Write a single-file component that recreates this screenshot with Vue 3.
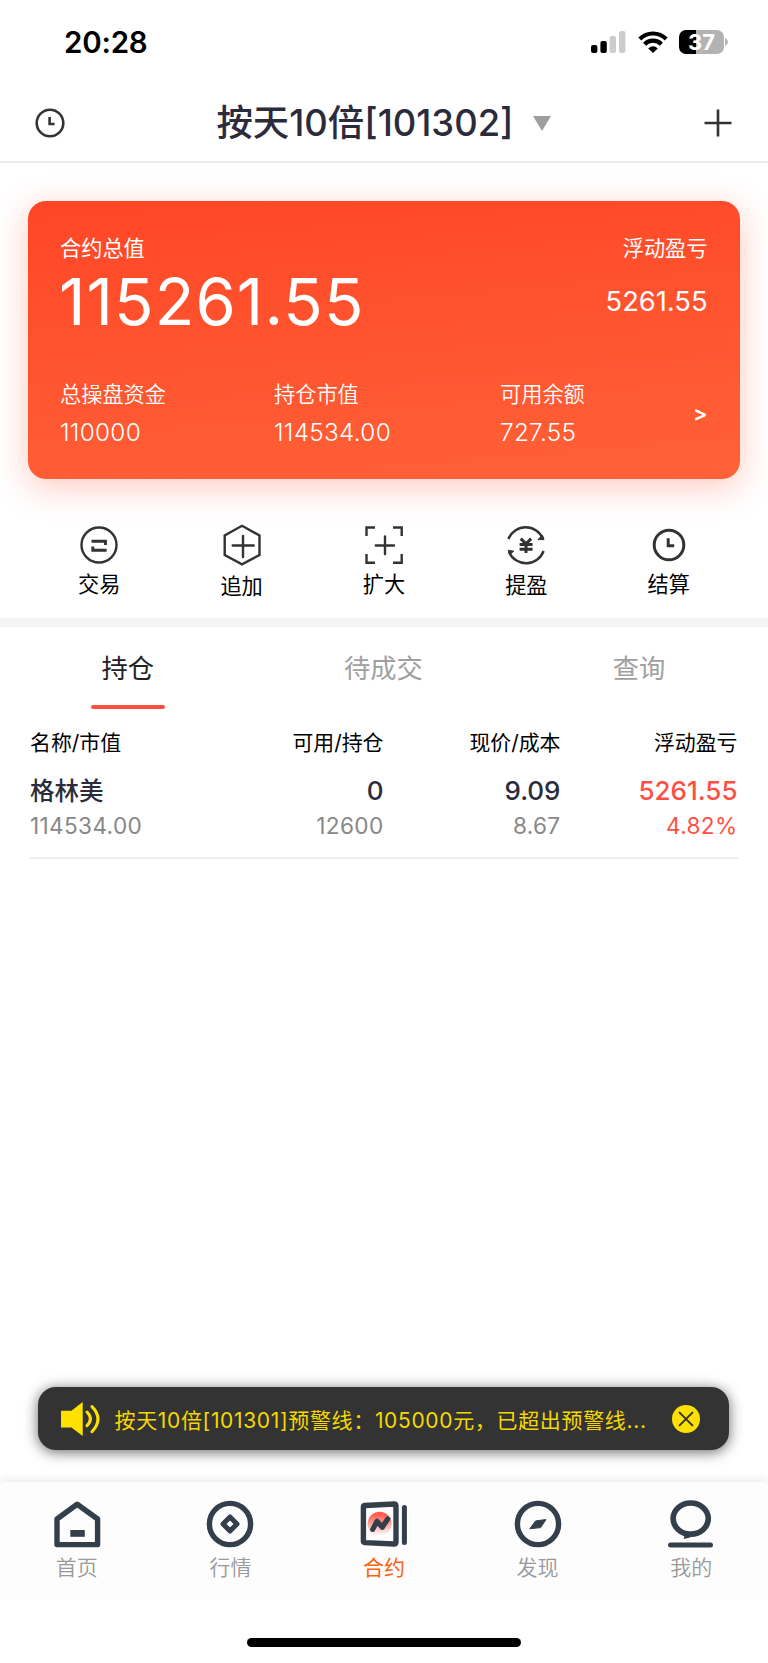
<script setup>
import { ref } from 'vue';

const account = ref({
    name: '按天10倍[101302]',
    total: '115261.55',
    profit: '5261.55',
});

const funds = [
    { label: '总操盘资金', value: '110000' },
    { label: '持仓市值', value: '114534.00' },
    { label: '可用余额', value: '727.55' },
];

const actions = [
    { key: 'trade', label: '交易' },
    { key: 'append', label: '追加' },
    { key: 'expand', label: '扩大' },
    { key: 'withdraw', label: '提盈' },
    { key: 'settle', label: '结算' },
];

const tabs = ['持仓', '待成交', '查询'];
const activeTab = ref('持仓');

const columns = ['名称/市值', '可用/持仓', '现价/成本', '浮动盈亏'];
const positions = [
    {
        name: '格林美',
        value: '114534.00',
        usable: '0',
        amount: '12600',
        price: '9.09',
        cost: '8.67',
        profit: '5261.55',
        rate: '4.82%',
    },
];

const showNotice = ref(true);
const notice = '按天10倍[101301]预警线：105000元，已超出预警线...';

const navs = [
    { key: 'home', label: '首页' },
    { key: 'market', label: '行情' },
    { key: 'contract', label: '合约' },
    { key: 'discover', label: '发现' },
    { key: 'mine', label: '我的' },
];
const activeNav = ref('contract');
</script>

<template>
    <div class="page">
        <div class="status-bar">
            <span class="time">20:28</span>
            <div class="status-icons">
                <svg class="signal" width="35" height="22" viewBox="0 0 35 22">
                    <rect x="0" y="14" width="6.4" height="8" rx="2" />
                    <rect x="9.4" y="10" width="6.4" height="12" rx="2" />
                    <rect x="18.6" y="5" width="6.4" height="17" rx="2" fill="#ccc" />
                    <rect x="28" y="0" width="6.4" height="22" rx="2" fill="#ccc" />
                </svg>
                <svg class="wifi" width="30" height="22" viewBox="0 0 30 22">
                    <g fill="none" stroke="#000" stroke-width="4.2">
                        <path d="M1.8 8A18.6 18.6 0 0 1 28.2 8" />
                        <path d="M6.6 13.2A11.8 11.8 0 0 1 23.4 13.2" />
                    </g>
                    <path d="M10.2 17.4Q15 13.3 19.8 17.4L15 22Z" />
                </svg>
                <div class="battery">
                    <span>37</span>
                </div>
                <svg class="battery-cap" width="3" height="8" viewBox="0 0 3 8">
                    <path d="M0 0Q3 1.4 3 4T0 8Z" fill="#b3b3b3" />
                </svg>
            </div>
        </div>

        <header class="header">
            <svg class="icon-clock" width="30" height="30" viewBox="0 0 30 30">
                <circle cx="15" cy="15" r="13.3" />
                <path d="M14.6 9v7h5" />
            </svg>
            <div class="title">
                <span>{{ account.name }}</span>
                <i class="caret"></i>
            </div>
            <svg class="icon-plus" width="28" height="28" viewBox="0 0 28 28">
                <path d="M14 .5v27M.5 14h27" />
            </svg>
        </header>

        <section class="card">
            <div class="card-labels">
                <span>合约总值</span>
                <span>浮动盈亏</span>
            </div>
            <div class="card-main">
                <span class="total">{{ account.total }}</span>
                <span class="profit">{{ account.profit }}</span>
            </div>
            <div class="card-funds">
                <div v-for="item in funds" :key="item.label" class="fund">
                    <p class="fund-label">{{ item.label }}</p>
                    <p class="fund-value">{{ item.value }}</p>
                </div>
                <span class="more">&gt;</span>
            </div>
        </section>

        <nav class="actions">
            <a v-for="item in actions" :key="item.key" :class="['action', item.key]">
                <svg v-if="item.key === 'trade'" width="38" height="38" viewBox="0 0 38 38">
                    <circle cx="19" cy="19" r="17.5" />
                    <path d="M11.5 15.3h14v3.6M26.6 24.3H12.8v-3.8" stroke-width="2.9" />
                </svg>
                <svg v-else-if="item.key === 'append'" width="38" height="42" viewBox="0 0 38 42">
                    <path d="M19 1.8L36.5 11.5V31L19 40.3L1.7 31V11.5Z" />
                    <path d="M9.7 21.5h21M20 12v21" stroke-linecap="round" />
                </svg>
                <svg v-else-if="item.key === 'expand'" width="38" height="38" viewBox="0 0 38 38">
                    <path d="M1.5 10V1.5H10M28 1.5h8.7V10M36.7 28v8.7H28M10 36.7H1.5V28" />
                    <path d="M10.8 19.5H29M20 10.5v17.5" stroke-linecap="round" />
                </svg>
                <svg v-else-if="item.key === 'withdraw'" width="38" height="40" viewBox="0 0 38 40">
                    <path d="M1.4 14A18.6 18.6 0 0 1 36 14M36.6 26A18.6 18.6 0 0 1 2 27" />
                    <path d="M31 14.6h6L35.4 10ZM1.2 25.2L6.8 26.2 2.8 29.4Z" stroke-width="1" fill="#333" />
                    <path d="M13.7 13.6l5.3 5.2 5.1-5.2M12.6 19.6h13M12.6 24.3h13M19 18.8V28" stroke-width="3" />
                </svg>
                <svg v-else width="34" height="34" viewBox="0 0 34 34">
                    <circle cx="17" cy="17" r="14.8" stroke-width="3" />
                    <path d="M16.2 10.2v7.6h6" stroke-width="3" />
                </svg>
                <span>{{ item.label }}</span>
            </a>
        </nav>

        <div class="tabs">
            <div
                v-for="tab in tabs"
                :key="tab"
                :class="['tab', { active: tab === activeTab }]"
                @click="activeTab = tab"
            >
                {{ tab }}
            </div>
        </div>

        <div class="table">
            <div class="row table-head">
                <span v-for="col in columns" :key="col">{{ col }}</span>
            </div>
            <div v-for="p in positions" :key="p.name" class="position">
                <div class="row primary">
                    <span class="name">{{ p.name }}</span>
                    <span>{{ p.usable }}</span>
                    <span>{{ p.price }}</span>
                    <span class="up">{{ p.profit }}</span>
                </div>
                <div class="row secondary">
                    <span>{{ p.value }}</span>
                    <span>{{ p.amount }}</span>
                    <span>{{ p.cost }}</span>
                    <span class="up">{{ p.rate }}</span>
                </div>
            </div>
        </div>

        <div v-if="showNotice" class="notice">
            <svg class="speaker" width="42" height="36" viewBox="0 0 42 36">
                <path d="M1 9.7h10.4L22.7 1v34L11.4 26.5H1Z" fill="#ffe100" stroke="none" />
                <path d="M27 11q6.8 6.8 0 13.6M32 5.6q12 12.4 0 25" />
            </svg>
            <span class="notice-text">{{ notice }}</span>
            <svg class="close" width="28" height="28" viewBox="0 0 28 28" @click="showNotice = false">
                <circle cx="14" cy="14" r="14" fill="#ffe100" stroke="none" />
                <path d="M7.6 7.6l12.8 12.8M20.4 7.6L7.6 20.4" />
            </svg>
        </div>

        <footer class="tabbar">
            <a
                v-for="item in navs"
                :key="item.key"
                :class="['nav', { active: item.key === activeNav }]"
                @click="activeNav = item.key"
            >
                <svg v-if="item.key === 'home'" width="48" height="48" viewBox="0 0 48 48">
                    <path d="M24.2 4.2L44.6 19V44.6H4V19Z" />
                    <path d="M17.3 33.4h14.5" stroke-width="6.8" />
                </svg>
                <svg v-else-if="item.key === 'market'" width="48" height="48" viewBox="0 0 48 48">
                    <circle cx="24" cy="24" r="20.6" />
                    <path d="M24 17l7 7-7 7-7-7Z" stroke-width="5" />
                </svg>
                <svg v-else-if="item.key === 'contract'" width="48" height="48" viewBox="0 0 48 48">
                    <defs>
                        <linearGradient id="sun" x1="0" y1="0" x2="0" y2="1">
                            <stop offset="0.1" stop-color="#ff5b4e" />
                            <stop offset="1" stop-color="#ff5b4e" stop-opacity="0" />
                        </linearGradient>
                    </defs>
                    <path d="M5 5.5L34 4Q36 4 36 6V42Q36 44 34 44L5 42.6Q3.4 42.4 3.4 41V7Q3.4 5.6 5 5.5Z" />
                    <circle cx="19.6" cy="23.8" r="12" fill="url(#sun)" stroke="none" />
                    <path d="M12.7 29.4L17 21.2 22.3 27.2 27.7 19" stroke-width="5.2" stroke-linecap="round" />
                    <path d="M44.4 7.6V42.5" stroke-width="5" stroke-linecap="round" />
                </svg>
                <svg v-else-if="item.key === 'discover'" width="48" height="48" viewBox="0 0 48 48">
                    <circle cx="24" cy="24" r="20.6" />
                    <path d="M15.8 28.8L21.6 20.9 32 19.6 26.6 27.6Z" fill="#333f4a" stroke-width="1" />
                </svg>
                <svg v-else width="48" height="48" viewBox="0 0 48 48">
                    <ellipse cx="23.7" cy="18.6" rx="17.6" ry="15.6" stroke-width="5.6" />
                    <path d="M15.5 33L17.5 35.6 16.6 39Q28 37.4 36 29.6Z" fill="#333f4a" stroke="none" />
                    <path d="M3.5 45H43.5" stroke-width="5" stroke-linecap="round" />
                </svg>
                <span>{{ item.label }}</span>
            </a>
        </footer>
        <div class="home-indicator"></div>
    </div>
</template>

<style>
body {
    background: #fff;
}
</style>

<style scoped>
.page {
    display: flex;
    flex-direction: column;
    width: 768px;
    height: 1663px;
    overflow: hidden;
    background: #fff;
    color: #000;
    font-family: Inter, "Noto Sans CJK SC", sans-serif;
    font-size: 21.2px;
}

svg {
    display: block;
    flex-shrink: 0;
}

p {
    margin: 0;
}

.status-bar {
    display: flex;
    align-items: center;
    justify-content: space-between;
    height: 84px;
    padding: 0 40px 0 64px;
}

.time {
    font-size: 29.5px;
    font-weight: 600;
    letter-spacing: -0.2px;
}

.status-icons {
    display: flex;
    align-items: center;
}

.wifi {
    margin: 0 11px 0 12px;
}

.battery {
    width: 45px;
    height: 24px;
    border-radius: 7px;
    background: linear-gradient(90deg, #000 38%, #b3b3b3 38%);
    color: #fff;
    font-size: 22px;
    font-weight: 700;
    line-height: 24px;
    text-align: center;
}

.battery-cap {
    margin-left: 1px;
}

.header {
    display: flex;
    align-items: center;
    justify-content: space-between;
    box-sizing: border-box;
    height: 79px;
    padding: 1px 36px 0 35px;
    border-bottom: 2px solid #ececec;
}

.icon-clock,
.icon-plus {
    fill: none;
    stroke: #333;
    stroke-width: 2.6;
}

.title {
    display: flex;
    align-items: center;
    gap: 19px;
    margin-left: -2px;
    color: #2b2b3b;
    font-size: 36.4px;
    font-weight: 500;
    line-height: 50px;
}

.caret {
    border: 9.5px solid transparent;
    border-top: 15px solid #9e9e9e;
    border-bottom: 0;
}

.card {
    box-sizing: border-box;
    height: 278px;
    margin: 37.5px 28px 0;
    padding: 31px 32.5px 0 32px;
    border-radius: 18px;
    background: linear-gradient(175deg, #ff4626, #ff6238);
    box-shadow: 0 8px 34px rgba(255, 72, 38, 0.3);
    color: #fff;
}

.card-labels {
    display: flex;
    justify-content: space-between;
    line-height: 32px;
}

.card-main {
    display: flex;
    align-items: center;
    justify-content: space-between;
    height: 76px;
}

.total {
    margin-left: -1px;
    font-size: 65px;
    letter-spacing: 1.1px;
}

.profit {
    font-size: 27.3px;
}

.card-funds {
    display: flex;
    align-items: center;
    margin-top: 35px;
}

.fund {
    flex-shrink: 0;
    width: 214px;
}

.fund + .fund {
    width: 226px;
}

.fund:nth-child(3) {
    width: 150px;
}

.fund-label {
    line-height: 38px;
}

.fund-value {
    font-size: 24.3px;
    letter-spacing: 0.3px;
    line-height: 38px;
}

.fund-label,
.fund-value {
    font-weight: 350;
}

.more {
    margin-left: auto;
    font-weight: 600;
}

.actions {
    display: flex;
    padding: 45.5px 28px 0;
    height: 93.5px;
    border-bottom: 9px solid #f3f3f3;
}

.action {
    display: flex;
    flex-direction: column;
    align-items: center;
    width: 142.4px;
    gap: 4px;
    line-height: 33px;
}

.action svg {
    margin-top: 2px;
    fill: none;
    stroke: #333;
    stroke-width: 2.4;
}

.action.append svg {
    margin-top: 0;
}

.action.withdraw svg {
    margin-top: 1px;
}

.action.settle svg {
    margin: 4px 0 2px;
}

.tabs {
    display: flex;
    height: 82px;
}

.tab {
    display: flex;
    flex-direction: column;
    align-items: center;
    width: 255.6px;
    color: #a0a0a0;
    font-size: 26.3px;
    line-height: 84px;
}

.tab.active {
    color: #222;
}

.tab.active::after {
    content: "";
    flex-shrink: 0;
    width: 74px;
    height: 4px;
    margin-top: -6px;
    border-radius: 2px;
    background: #ff4f42;
}

.table {
    padding: 18px 30px 0;
}

.row {
    display: grid;
    grid-template-columns: 176px 177.5px 177px 177px;
    text-align: right;
}

.row span:first-child {
    text-align: left;
}

.table-head {
    font-size: 20.9px;
    line-height: 32px;
}

.position {
    height: 98px;
    border-bottom: 2px solid #eee;
}

.primary {
    padding-top: 13px;
    color: #2b2b3b;
    font-size: 26px;
    font-weight: 500;
    line-height: 38px;
}

.primary .name {
    font-size: 24.5px;
}

.secondary {
    color: #888;
    font-size: 22.6px;
    letter-spacing: 0.35px;
    line-height: 32px;
}

.row .up {
    color: #ff4f42;
}

.notice {
    display: flex;
    align-items: center;
    box-sizing: border-box;
    height: 63px;
    margin: auto 39px 32px 38px;
    padding: 0 29px 0 22px;
    border-radius: 18px;
    background: #333;
    box-shadow: 0 2px 14px rgba(0, 0, 0, 0.6);
    color: #f5d800;
}

.speaker {
    fill: none;
    stroke: #ffe100;
    stroke-width: 3;
    stroke-linecap: round;
}

.notice-text {
    margin-left: 12.5px;
    font-size: 21px;
    letter-spacing: 0.66px;
    white-space: nowrap;
}

.close {
    margin-left: auto;
    fill: none;
    stroke: #333;
    stroke-width: 2;
    stroke-linecap: round;
}

.tabbar {
    display: flex;
    height: 117px;
    border-radius: 4px;
    background: #fdfdfd;
    box-shadow: 0 0 12px rgba(0, 0, 0, 0.12);
    clip-path: inset(-14px 0 0);
}

.nav {
    display: flex;
    flex-direction: column;
    align-items: center;
    width: 153.6px;
    padding-top: 17.5px;
    gap: 3px;
    color: #999;
    font-size: 21px;
    font-weight: 350;
    line-height: 33px;
}

.nav svg {
    fill: none;
    stroke: #333f4a;
    stroke-width: 5.4;
    stroke-linejoin: round;
}

.nav.active {
    color: #ff6010;
    font-weight: 400;
}

.home-indicator {
    width: 274px;
    height: 9px;
    margin: 39px auto 16px;
    border-radius: 5px;
    background: #000;
}
</style>
